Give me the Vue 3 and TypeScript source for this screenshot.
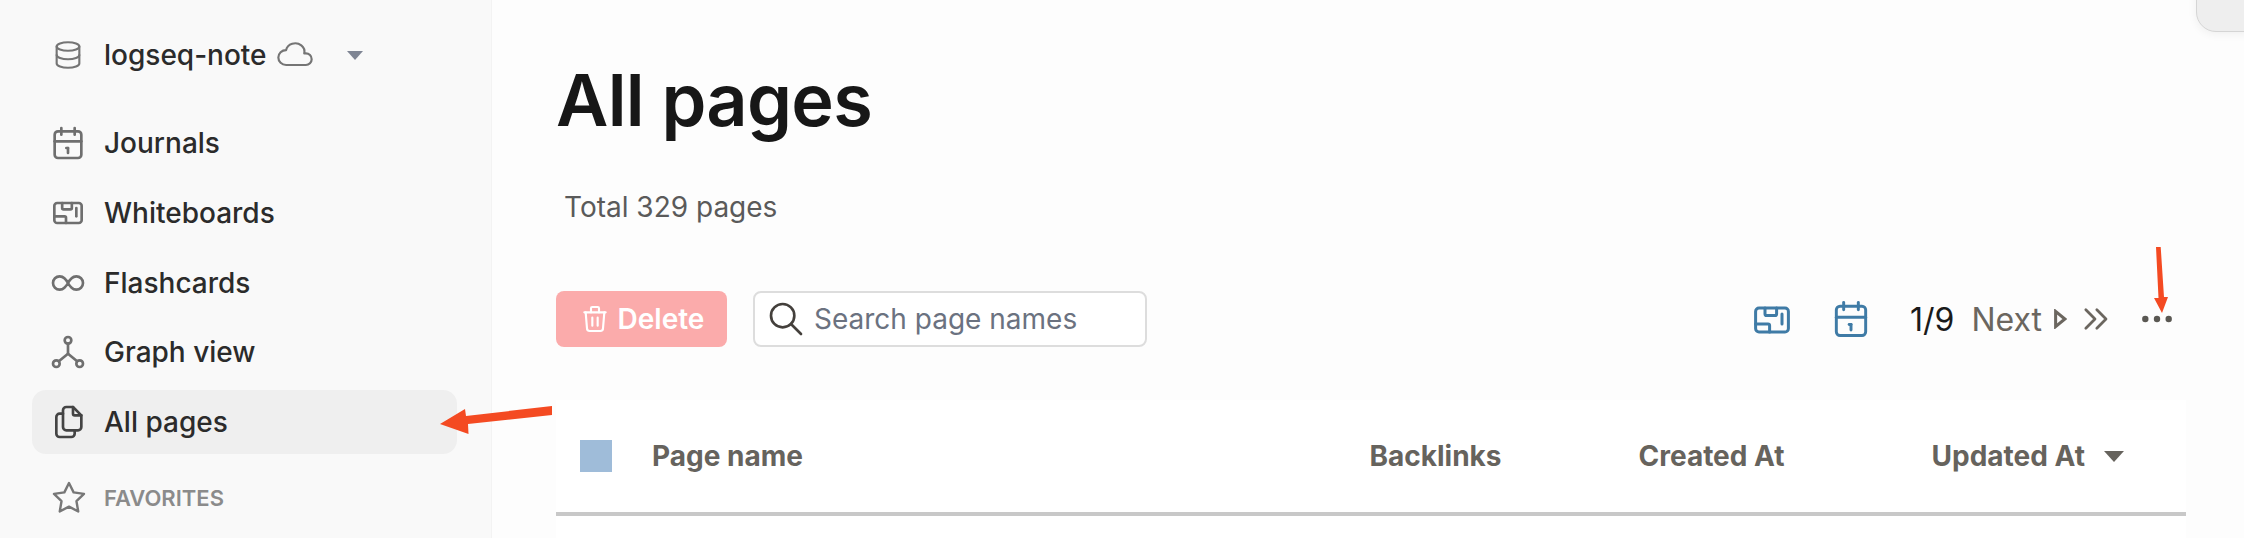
<script setup lang="ts">
interface NavItem { label: string; paths: string[]; active?: boolean }
const calendar = ['M4 7a2 2 0 0 1 2-2h12a2 2 0 0 1 2 2v12a2 2 0 0 1-2 2H6a2 2 0 0 1-2-2V7z', 'M16 3v4', 'M8 3v4', 'M4 11h16', 'M11 15h1', 'M12 15v3']
const board = ['M5.5 6h13a1.7 1.7 0 0 1 1.7 1.7v8.6a1.7 1.7 0 0 1-1.7 1.7h-13a1.7 1.7 0 0 1-1.7-1.7V7.700a1.700 1.700 0 0 1 1.700-1.700z', 'M8.500 6v3a.8.8 0 0 0 .8.8h4.200a.8.8 0 0 0 .8-.8V6', 'M3.800 14h6.200a.8.8 0 0 1 .8.8V18', 'M17 9v5']
const nav: NavItem[] = [
  { label: 'Journals', paths: calendar },
  { label: 'Whiteboards', paths: board },
  { label: 'Flashcards', paths: ['M9.828 9.172a4 4 0 1 0 0 5.656a10 10 0 0 0 2.172-2.828a10 10 0 0 1 2.172-2.828a4 4 0 1 1 0 5.656a10 10 0 0 1-2.172-2.828a10 10 0 0 0-2.172-2.828'] },
  { label: 'Graph view', paths: ['M10 5a2 2 0 1 0 4 0a2 2 0 1 0-4 0', 'M3 19a2 2 0 1 0 4 0a2 2 0 1 0-4 0', 'M17 19a2 2 0 1 0 4 0a2 2 0 1 0-4 0', 'M6.500 17.500l5.500-4.500l5.500 4.500', 'M12 7v6'] },
  { label: 'All pages', active: true, paths: ['M15 3v4a1 1 0 0 0 1 1h4', 'M18 17h-7a2 2 0 0 1-2-2v-10a2 2 0 0 1 2-2h4l5 5v7a2 2 0 0 1-2 2z', 'M16 17v2a2 2 0 0 1-2 2h-7a2 2 0 0 1-2-2v-10a2 2 0 0 1 2-2h2'] },
]
const columns = ['Page name', 'Backlinks', 'Created At']
</script>

<template>
  <div class="page">
    <aside class="sidebar">
      <div class="repo">
        <svg class="icon repo-db" viewBox="0 0 24 24"><ellipse cx="12" cy="6" rx="8" ry="3" /><path d="M4 6v6a8 3 0 0 0 16 0v-6" /><path d="M4 12v6a8 3 0 0 0 16 0v-6" /></svg>
        <span class="repo-name">logseq-note</span>
        <svg class="icon repo-cloud" viewBox="0 0 24 24"><path d="M6.657 18c-2.572 0-4.657-2.007-4.657-4.483c0-2.475 2.085-4.482 4.657-4.482c.393-1.762 1.794-3.2 3.675-3.773c1.880-.572 3.956-.193 5.444 1c1.488 1.190 2.162 3.007 1.770 4.769h.990c1.913 0 3.464 1.560 3.464 3.486c0 1.927-1.551 3.487-3.465 3.487h-11.878" /></svg>
        <span class="repo-caret"></span>
      </div>
      <nav class="nav">
        <a v-for="item in nav" :key="item.label" class="nav-row" :class="{ active: item.active }">
          <svg class="icon nav-icon" viewBox="0 0 24 24"><path v-for="d in item.paths" :key="d" :d="d" /></svg>
          <span>{{ item.label }}</span>
        </a>
      </nav>
      <div class="favorites">
        <svg class="icon fav-icon" viewBox="0 0 24 24"><path d="M12 17.750l-6.172 3.245l1.179-6.873l-5-4.867l6.900-1l3.086-6.253l3.086 6.253l6.900 1l-5 4.867l1.179 6.873z" /></svg>
        <span>FAVORITES</span>
      </div>
    </aside>

    <main class="main">
      <h1 class="title">All pages</h1>
      <div class="total">Total 329 pages</div>
      <div class="toolbar">
        <button class="delete">
          <svg class="icon trash" viewBox="0 0 24 24"><path d="M4 7h16" /><path d="M10 11v6" /><path d="M14 11v6" /><path d="M5 7l1 12a2 2 0 0 0 2 2h8a2 2 0 0 0 2-2l1-12" /><path d="M9 7v-3a1 1 0 0 1 1-1h4a1 1 0 0 1 1 1v3" /></svg>
          <span>Delete</span>
        </button>
        <div class="search">
          <svg class="icon search-icon" viewBox="0 0 24 24"><path d="M3 10a7 7 0 1 0 14 0a7 7 0 1 0-14 0" /><path d="M21 21l-6-6" /></svg>
          <span>Search page names</span>
        </div>
        <div class="tools">
          <svg class="icon tool-board" viewBox="0 0 24 24"><path v-for="d in board" :key="d" :d="d" /></svg>
          <svg class="icon tool-cal" viewBox="0 0 24 24"><path v-for="d in calendar" :key="d" :d="d" /></svg>
          <span class="pager">1/9</span>
          <span class="next">Next</span>
          <svg class="play" viewBox="0 0 12 18"><path d="M1.500 2v14L10 9z" /></svg>
          <svg class="icon last" viewBox="0 0 24 24"><path d="M7 7l5 5l-5 5" /><path d="M13 7l5 5l-5 5" /></svg>
          <svg class="dots" viewBox="0 0 30 8"><circle cx="3.300" cy="4" r="3.200" /><circle cx="15" cy="4" r="3.200" /><circle cx="26.700" cy="4" r="3.200" /></svg>
        </div>
      </div>
      <section class="table">
        <div class="thead">
          <span class="check"></span>
          <span v-for="c in columns" :key="c">{{ c }}</span>
          <span class="sorted">Updated At<i class="sort-caret"></i></span>
        </div>
      </section>
    </main>

    <div class="corner"></div>
    <svg class="marks" viewBox="0 0 2244 538">
      <polygon points="552,406 552,415 468,424 468.500,434 440,424 465,409 466,416" />
      <polygon points="2156,247 2160.700,247 2164,297 2168,297 2162,313 2154,298 2158.500,298" />
    </svg>
  </div>
</template>

<style>
html, body { margin: 0; background: #fdfdfd; overflow: hidden; }
</style>

<style scoped>
.page {
  position: relative;
  display: flex;
  width: 2244px;
  height: 538px;
  overflow: hidden;
  font-family: Inter, "Noto Sans", sans-serif;
  background: #fdfdfd;
}
.icon { fill: none; stroke-linecap: round; stroke-linejoin: round; flex: none; display: block; }
.sidebar {
  width: 492px;
  flex: none;
  box-sizing: border-box;
  padding: 23px 34px 0 32px;
  background: #f9f9f9;
  border-right: 1px solid #f3f3f3;
  color: #2b2b2b;
}
.repo { display: flex; align-items: center; height: 64px; font-size: 28px; font-weight: 500; padding-left: 19px; }
.repo-db { width: 34px; height: 34px; stroke: #757575; stroke-width: 1.500; margin-right: 19px; }
.repo-name { margin-right: 8px; }
.repo-cloud { width: 40px; height: 40px; stroke: #757575; stroke-width: 1.300; }
.repo-caret { width: 0; height: 0; margin-left: 32px; border-left: 8px solid transparent; border-right: 8px solid transparent; border-top: 9px solid #7f8594; }
.nav { display: flex; flex-direction: column; gap: 5.750px; margin-top: 24px; }
.nav-row { display: flex; align-items: center; height: 64px; border-radius: 14px; font-size: 28px; font-weight: 500; padding-left: 16px; }
.nav-row.active { background: #efefef; }
.nav-icon { width: 40px; height: 40px; margin-right: 16px; stroke: #6f6f6f; stroke-width: 1.600; }
.active .nav-icon { stroke: #444; }
.favorites { display: flex; align-items: center; height: 40px; margin-top: 24px; padding-left: 19px; font-size: 22px; font-weight: 600; color: #8b8b8b; }
.fav-icon { width: 36px; height: 36px; margin-right: 17px; stroke: #777; stroke-width: 1.600; }

.main { flex: 1; min-width: 0; box-sizing: border-box; padding: 55px 58px 0 64px; }
.title { margin: 0; height: 90px; font-size: 72px; line-height: 90px; font-weight: 600; letter-spacing: -0.7px; color: #171717; }
.total { margin-top: 42px; margin-left: 8px; height: 40px; font-size: 28px; line-height: 40px; color: #5a5a5a; }
.toolbar { display: flex; align-items: center; height: 56px; margin-top: 64px; }
.delete {
  display: flex; align-items: center; justify-content: center; gap: 7px;
  width: 171px; height: 56px; padding: 0; border: 0; border-radius: 8px;
  background: #fbabab; color: #fff; font: 600 28px Inter, sans-serif;
}
.trash { width: 32px; height: 32px; stroke: #fff; stroke-width: 1.600; }
.search {
  display: flex; align-items: center; box-sizing: border-box;
  width: 394px; height: 56px; margin-left: 26px; padding-left: 11px;
  border: 2px solid #ddd; border-radius: 8px; background: #fff;
  font-size: 28px; color: #6b7280;
}
.search-icon { width: 40px; height: 40px; stroke: #44403c; stroke-width: 1.600; margin-right: 8px; }
.tools { display: flex; align-items: center; margin-left: auto; color: #6b665f; padding-right: 14px; }
.tool-board { width: 48px; height: 48px; stroke: #3f7ba6; stroke-width: 1.500; margin-top: 2px; }
.tool-cal { width: 44px; height: 44px; stroke: #3f7ba6; stroke-width: 1.600; margin-left: 33px; }
.pager { margin-left: 37px; font-size: 32px; color: #1a1a1a; }
.next { margin-left: 17px; font-size: 32px; }
.play { width: 13px; height: 20px; margin-left: 12px; fill: none; stroke: #6b665f; stroke-width: 2.800; }
.last { width: 44px; height: 44px; margin-left: 6px; stroke: #6b665f; stroke-width: 1.500; }
.dots { width: 30px; height: 8px; margin-left: 25px; fill: #5a5853; }

.table { margin-top: 53px; height: 138px; background: #fff; }
.thead {
  display: grid;
  grid-template-columns: 96px 717.500px 269px 293px 1fr;
  align-items: center;
  box-sizing: border-box;
  height: 116px;
  border-bottom: 4px solid #c8c8c8;
  font-size: 28px;
  font-weight: 700;
  color: #66635d;
}
.check { width: 32px; height: 32px; margin-left: 24px; background: #9fbcd9; }
.sorted { display: flex; align-items: center; }
.sort-caret { width: 0; height: 0; margin-left: 19px; border-left: 10px solid transparent; border-right: 10px solid transparent; border-top: 11px solid #66635d; }

.corner {
  position: absolute; top: -20px; right: -20px;
  width: 68px; height: 52px; border-radius: 20px;
  background: #eeeeee; border: 1px solid #d5d5d5; box-sizing: border-box;
  box-shadow: 0 2px 10px rgba(0, 0, 0, 0.06);
}
.marks { position: absolute; inset: 0; width: 2244px; height: 538px; pointer-events: none; fill: #f44a22; }
</style>
